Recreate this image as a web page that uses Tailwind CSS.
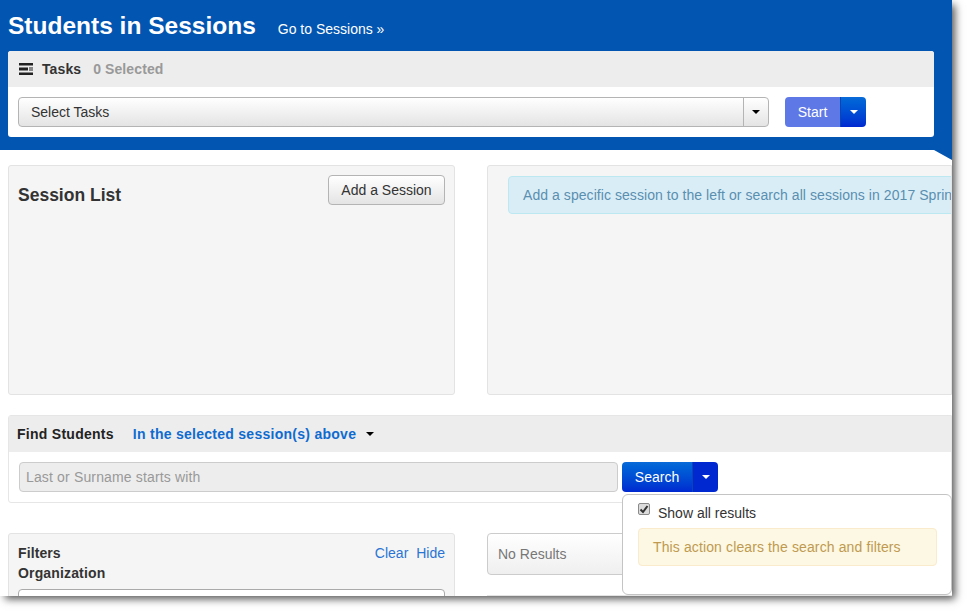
<!DOCTYPE html>
<html lang="en">
  <head>
    <meta charset="UTF-8" />
    <title>Students in Sessions</title>
    <script src="https://cdn.jsdelivr.net/npm/@tailwindcss/browser@4"></script>
  </head>
  <body class="bg-white h-[611px] w-[967px] overflow-hidden font-['Liberation_Sans',sans-serif] text-[14px] text-[#333]">
    <div class="relative w-[952px] h-[596px] bg-white overflow-hidden">
      <!-- header band -->
      <div class="bg-[#0255b0] h-[150px] px-2">
        <div class="flex items-baseline h-[51px] pt-[9px]">
          <h1 class="text-[24.5px] leading-[33px] font-bold text-white">Students in Sessions</h1>
          <a class="ml-[22px] text-white text-[14px]">Go to Sessions »</a>
        </div>
        <div class="w-[926px] h-[86px] bg-white rounded-[3px] overflow-hidden">
          <div class="flex items-center h-[36px] bg-[#ededed] pl-[11px] font-bold tracking-[0.1px]">
            <svg class="w-[14px] h-[12px] mr-[9px]" viewBox="0 0 14 12">
              <path fill="#222" d="M0 0h14v2.5H0zM0 4.5h9v3H0zM10 4.5h4v1H10zM10 6.5h4v1H10zM0 9.5h14v2.5H0z" />
            </svg>
            <span>Tasks</span>
            <span class="ml-3 text-[#999]">0 Selected</span>
          </div>
          <div class="flex items-center pl-[10px] pt-[10px]">
            <div class="flex w-[751px] h-[30px] border border-[#b4b4b4] rounded-[4px] bg-gradient-to-b from-white to-[#e4e4e4]">
              <span class="flex-1 pl-3 leading-[28px]">Select Tasks</span>
              <span class="w-[25px] border-l border-[#b4b4b4] flex items-center justify-center">
                <span class="border-x-[4px] border-x-transparent border-t-[4px] border-t-black"></span>
              </span>
            </div>
            <div class="flex ml-4 h-[30px] rounded-[4px] overflow-hidden text-white">
              <span class="w-[55px] bg-[#5e78e6] text-center leading-[30px]">Start</span>
              <span class="w-[26px] bg-gradient-to-b from-[#0a6ad8] to-[#0028d0] border-l border-[#0a45b8] flex items-center justify-center">
                <span class="border-x-[4px] border-x-transparent border-t-[4px] border-t-white"></span>
              </span>
            </div>
          </div>
        </div>
      </div>
      <!-- fold under the header -->
      <div class="absolute left-[934px] top-[150px] w-[18px] h-[10px] bg-[#0255b0] [clip-path:polygon(0_0,100%_0,100%_100%)]"></div>

      <!-- sessions row -->
      <div class="flex mt-[15px] pl-2">
        <div class="w-[447px] h-[230px] bg-[#f5f5f5] border border-[#e3e3e3] rounded-[3px] flex justify-between px-[9px] pt-[9px]">
          <h2 class="text-[17.5px] font-bold leading-[40px]">Session List</h2>
          <button class="w-[117px] h-[30px] border border-[#b4b4b4] rounded-[4px] bg-gradient-to-b from-white to-[#e4e4e4]">Add a Session</button>
        </div>
        <div class="ml-[32px] flex-1 h-[230px] bg-[#f5f5f5] border border-[#e3e3e3] rounded-l-[3px] pl-5 pt-[10px] overflow-hidden">
          <div class="h-[38px] w-[600px] pl-[14px] leading-[36px] tracking-[0.06px] whitespace-nowrap bg-[#d9edf7] border border-[#bce8f1] rounded-[4px] text-[#5a8fb0]">Add a specific session to the left or search all sessions in 2017 Spring</div>
        </div>
      </div>

      <!-- find students -->
      <div class="mt-5 ml-2 h-[88px] border border-[#e6e6e6] rounded-l-[3px]">
        <div class="flex items-center h-[36px] bg-[#ededed] pl-[8px] font-bold tracking-[0.27px]">
          <span class="text-[#222]">Find Students</span>
          <span class="ml-[19px] text-[#0f6bd0]">In the selected session(s) above</span>
          <span class="ml-[10px] border-x-[4px] border-x-transparent border-t-[4px] border-t-black"></span>
        </div>
        <div class="flex pl-[10px] pt-[10px]">
          <input class="w-[599px] h-[30px] px-[6px] tracking-[0.15px] bg-[#ededed] border border-[#ccc] rounded-[4px] placeholder:text-[#999]" placeholder="Last or Surname starts with" />
          <div class="flex ml-1 h-[30px] rounded-[4px] overflow-hidden text-white">
            <span class="w-[70px] bg-gradient-to-b from-[#0a6ad8] to-[#0028d0] text-center leading-[30px]">Search</span>
            <span class="w-[26px] bg-[#0028d0] border-l border-[#0a45b8] flex items-center justify-center">
              <span class="border-x-[4px] border-x-transparent border-t-[4px] border-t-white"></span>
            </span>
          </div>
        </div>
      </div>

      <!-- filters and results -->
      <div class="flex mt-[30px] pl-2">
        <div class="w-[447px] h-[80px] bg-[#f5f5f5] border border-[#e3e3e3] rounded-[3px] px-[9px] pt-[9px]">
          <div class="flex justify-between leading-[20px]">
            <span class="font-bold tracking-[0.1px]">Filters</span>
            <span class="text-[#2a74d4]">Clear <span class="ml-1">Hide</span></span>
          </div>
          <div class="font-bold tracking-[0.15px] leading-[20px]">Organization</div>
          <div class="h-[30px] mt-[6px] bg-white border border-[#aaa] rounded-[4px]"></div>
        </div>
        <div class="ml-[32px] flex-1">
          <div class="h-[42px] border border-[#ccc] rounded-[4px] bg-gradient-to-b from-white to-[#efefef] pl-[10px] leading-[40px] text-[#777]">No Results</div>
          <div class="mt-5 h-2 border-t border-[#e3e3e3]"></div>
        </div>
      </div>

      <!-- search options popover -->
      <div class="absolute left-[622px] top-[494px] w-[330px] h-[101px] bg-white border border-[#c4c4c4] rounded-[6px] pl-[15px] pr-[14px]">
        <div class="flex h-[33px]">
          <span class="mt-[8px] w-[12px] h-[12px] rounded-[2px] bg-[#dcdcdc] border border-[#8a8a8a] flex items-center justify-center">
            <svg class="w-[10px] h-[10px]" viewBox="0 0 10 10">
              <path fill="none" stroke="#333" stroke-width="2" d="M1.5 5.5L4 8L8.5 2" />
            </svg>
          </span>
          <span class="ml-[8px] mt-[10px] leading-[16px]">Show all results</span>
        </div>
        <div class="h-[38px] pl-[14px] leading-[36px] tracking-[0.12px] bg-[#fcf8e3] border border-[#faebcc] rounded-[4px] text-[#c09a50]">This action clears the search and filters</div>
      </div>
    </div>
    <!-- screenshot drop shadow, right and bottom edges -->
    <div class="absolute left-0 top-0 -z-10 w-[952px] h-[596px] shadow-[4px_4px_8px_-1px_#555]"></div>
  </body>
</html>
